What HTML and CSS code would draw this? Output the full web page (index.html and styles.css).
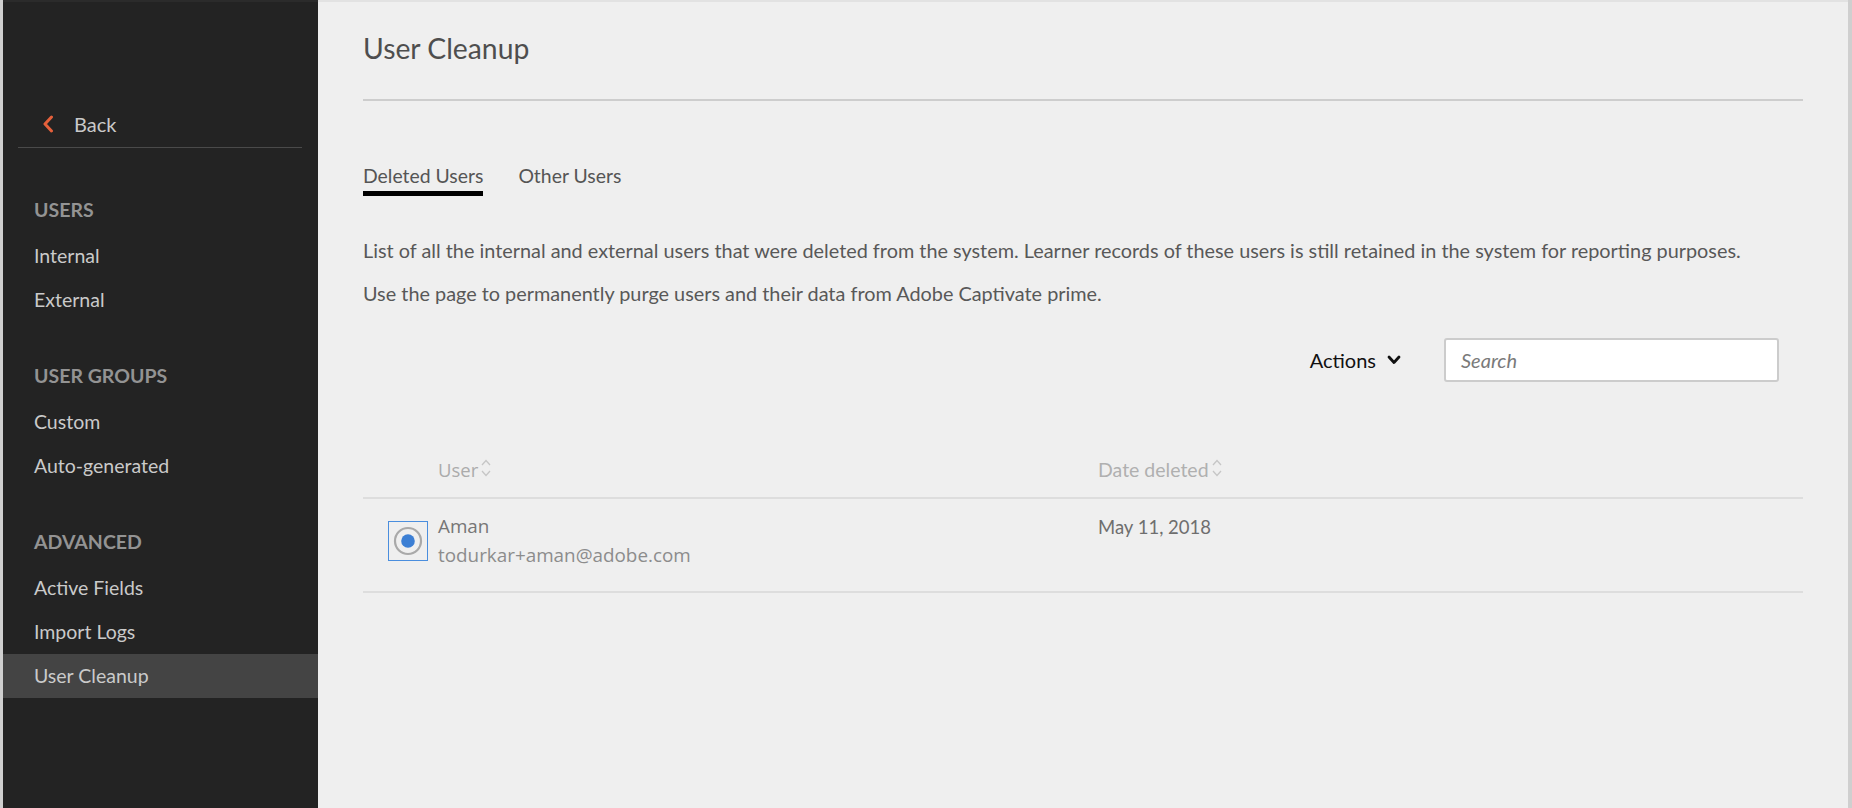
FILE: index.html
```html
<!DOCTYPE html>
<html lang="en">
<head>
<meta charset="utf-8">
<title>User Cleanup</title>
<link rel="stylesheet" href="styles.css">
</head>
<body>
<div class="app">
  <aside class="sidebar">
    <div class="back">
      <svg class="back-icon" width="12" height="18" viewBox="0 0 12 18"><polyline points="9.5,2 3,9 9.5,16" fill="none" stroke="#e5603b" stroke-width="3" stroke-linecap="round" stroke-linejoin="round"/></svg>
      <span>Back</span>
    </div>
    <nav class="nav">
      <div class="section">
        <div class="heading">USERS</div>
        <div class="item">Internal</div>
        <div class="item">External</div>
      </div>
      <div class="section">
        <div class="heading">USER GROUPS</div>
        <div class="item">Custom</div>
        <div class="item">Auto-generated</div>
      </div>
      <div class="section">
        <div class="heading">ADVANCED</div>
        <div class="item">Active Fields</div>
        <div class="item">Import Logs</div>
        <div class="item active">User Cleanup</div>
      </div>
    </nav>
  </aside>
  <main class="main">
    <h1 class="title">User Cleanup</h1>
    <div class="tabs">
      <div class="tab selected">Deleted Users</div>
      <div class="tab">Other Users</div>
    </div>
    <p class="desc first">List of all the internal and external users that were deleted from the system. Learner records of these users is still retained in the system for reporting purposes.</p>
    <p class="desc">Use the page to permanently purge users and their data from Adobe Captivate prime.</p>
    <div class="toolbar">
      <div class="actions">
        <span>Actions</span>
        <svg width="14" height="10" viewBox="0 0 14 10"><polyline points="2,2 7,7.5 12,2" fill="none" stroke="#111" stroke-width="2.8" stroke-linecap="round" stroke-linejoin="round"/></svg>
      </div>
      <div class="search">Search</div>
    </div>
    <div class="table">
      <div class="thead">
        <div class="col-check"></div>
        <div class="col-user th-user">User<svg class="sort" width="10" height="20" viewBox="0 0 10 20"><polyline points="1,7 5,2.5 9,7" fill="none" stroke="#c6c6c6" stroke-width="1.3"/><polyline points="1,13 5,17.5 9,13" fill="none" stroke="#c6c6c6" stroke-width="1.3"/></svg></div>
        <div class="col-date th-date">Date deleted<svg class="sort" width="10" height="20" viewBox="0 0 10 20"><polyline points="1,7 5,2.5 9,7" fill="none" stroke="#c6c6c6" stroke-width="1.3"/><polyline points="1,13 5,17.5 9,13" fill="none" stroke="#c6c6c6" stroke-width="1.3"/></svg></div>
      </div>
      <div class="row">
        <div class="col-check">
          <div class="radio-box">
            <svg width="38" height="38" viewBox="0 0 38 38"><circle cx="19" cy="19" r="13" fill="none" stroke="#a9a9a9" stroke-width="2.2"/><circle cx="19" cy="19" r="6.8" fill="#3c7fd4"/></svg>
          </div>
        </div>
        <div class="col-user">
          <div class="name">Aman</div>
          <div class="email">todurkar+aman@adobe.com</div>
        </div>
        <div class="col-date date">May 11, 2018</div>
      </div>
    </div>
  </main>
</div>
</body>
</html>
```

FILE: styles.css
```css
* { box-sizing: border-box; }
html, body { margin: 0; padding: 0; height: 100%; }
body {
  font-family: Lato, "Open Sans", sans-serif;
  background: #efefef;
  overflow: hidden;
}
.app {
  display: flex;
  height: 808px;
  border-left: 3px solid #cfcfcf;
  border-right: 4px solid #cfcfcf;
}
.sidebar {
  width: 315px;
  flex: 0 0 315px;
  background: #232323;
  border-top: 2px solid #2b2b2b;
}
.back {
  display: flex;
  align-items: center;
  margin: 100px 16px 0 15px;
  height: 46px;
  padding-bottom: 2px;
  border-bottom: 1px solid #4a4a4a;
  color: #c9c9c9;
  font-size: 20px;
}
.back-icon { margin-left: 24px; margin-right: 20px; }
.nav { padding-top: 38px; }
.section + .section { margin-top: 30px; }
.heading {
  height: 44px;
  line-height: 41px;
  padding-top: 3px;
  padding-left: 31px;
  margin-bottom: 4px;
  font-size: 19.5px;
  font-weight: 700;
  color: #939393;
}
.item {
  height: 44px;
  line-height: 44px;
  padding-left: 31px;
  font-size: 19.5px;
  color: #cacaca;
}
.item.active { background: #444444; }

.main {
  flex: 1;
  border-top: 2px solid #e2e2e2;
  padding: 0 45px;
  min-width: 0;
}
.title {
  margin: 29px 0 0;
  font-size: 28.3px;
  font-weight: 400;
  line-height: 35px;
  color: #4e4e4e;
  padding-bottom: 33px;
  border-bottom: 2px solid #cdcdcd;
}
.tabs {
  display: flex;
  gap: 35px;
  margin-top: 63px;
}
.tab {
  font-size: 19.4px;
  line-height: 24px;
  color: #555;
  padding-bottom: 3px;
  border-bottom: 5px solid transparent;
}
.tab.selected { border-bottom-color: #000; }
.desc {
  margin: 19px 0 0;
  font-size: 19.85px;
  line-height: 24px;
  color: #585858;
}
.desc.first { margin-top: 42px; }
.toolbar {
  display: flex;
  justify-content: flex-end;
  align-items: center;
  margin-top: 33px;
  padding-right: 24px;
}
.actions {
  display: flex;
  align-items: center;
  gap: 11px;
  font-size: 20px;
  line-height: 24px;
  color: #111;
  margin-right: 43px;
}
.search {
  width: 335px;
  height: 44px;
  background: #fff;
  border: 2px solid #cccccc;
  border-radius: 3px;
  padding-left: 15px;
  display: flex;
  align-items: center;
  font-size: 20px;
  font-style: italic;
  color: #7a7a7a;
}
.table { margin-top: 76px; }
.thead, .row {
  display: flex;
  border-bottom: 2px solid #dddddd;
}
.thead { padding-bottom: 15px; }
.row { padding: 13px 0 21px; }
.col-check { width: 75px; flex: 0 0 75px; }
.col-user { width: 660px; flex: 0 0 660px; }
.col-date { flex: 1; }
.th-user, .th-date {
  display: flex;
  align-items: center;
  line-height: 24px;
  color: #ababab;
}
.th-user {
  font-family: "Open Sans", sans-serif;
  font-size: 18.5px;
}
.th-date { font-size: 19.5px; color: #b0b0b0; }
.sort { margin-left: 3px; margin-top: -4px; }
.radio-box {
  margin: 9px 0 0 25px;
  width: 40px;
  height: 40px;
  border: 1px solid #4a8ede;
  display: flex;
  align-items: center;
  justify-content: center;
}
.name, .email {
  font-family: "Open Sans", sans-serif;
  font-size: 18.85px;
  line-height: 29px;
}
.name { color: #767676; }
.email { color: #8c8c8c; }
.date {
  font-size: 18.5px;
  line-height: 29px;
  padding-top: 1px;
  color: #6e6e6e;
}
```
